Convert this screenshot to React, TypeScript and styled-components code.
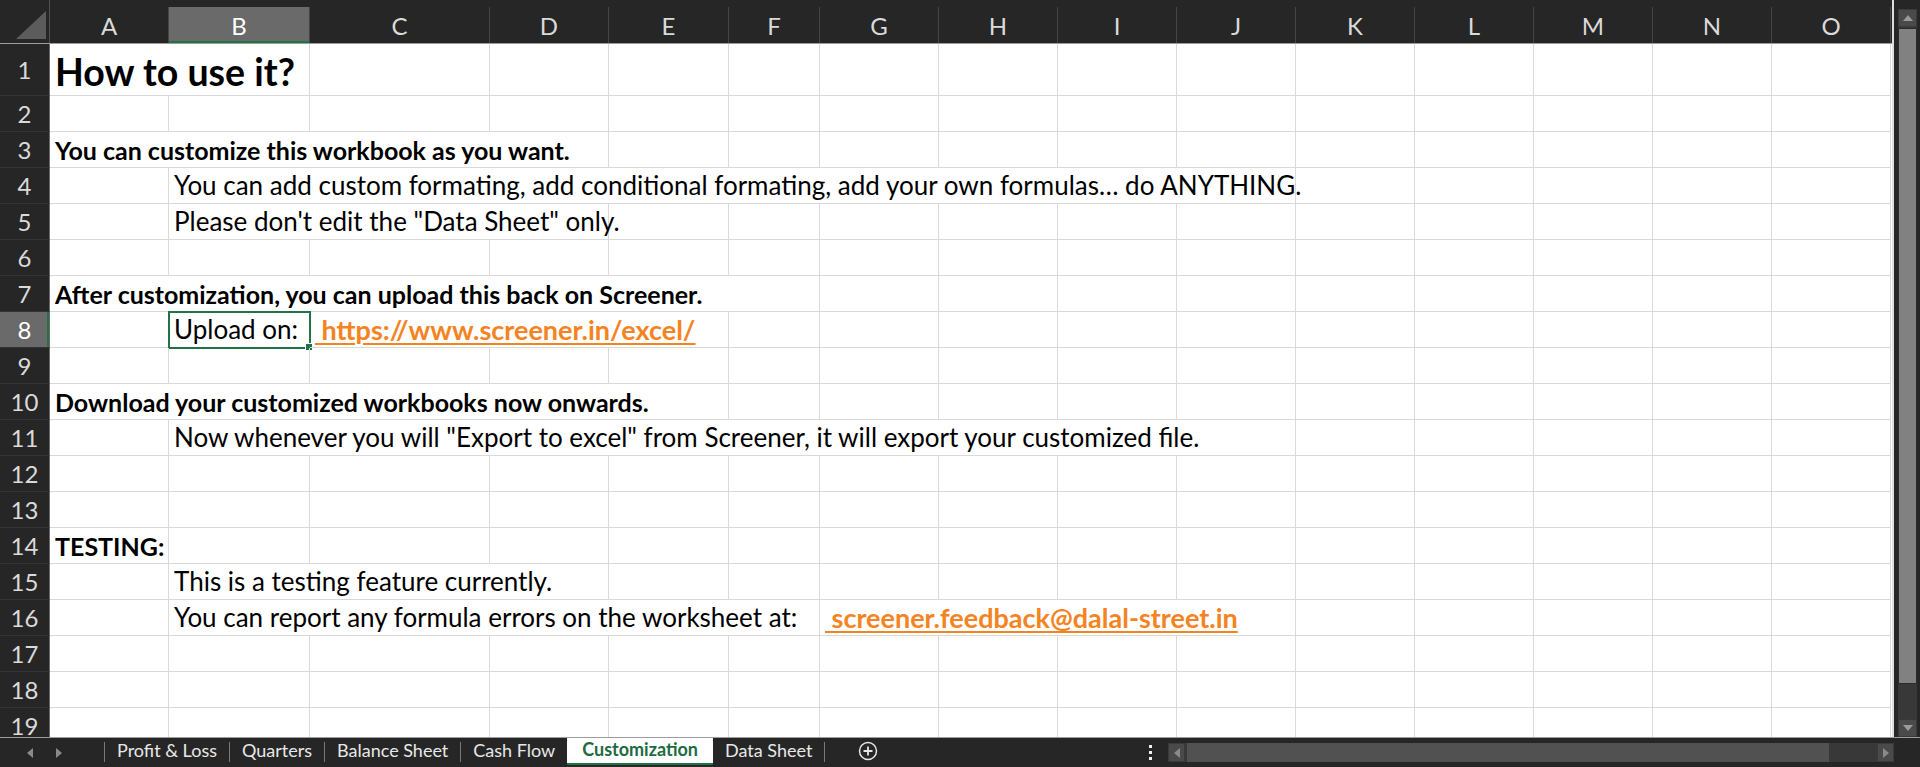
import * as React from 'react'
import styled, { createGlobalStyle, css } from 'styled-components'

const colours = {
  chrome: '#262626',
  headSelected: '#6a6a6a',
  headText: '#dadada',
  grid: '#d9d9d9',
  green: '#217346',
  link: '#f5831f',
}

const COLS = ['A', 'B', 'C', 'D', 'E', 'F', 'G', 'H', 'I', 'J', 'K', 'L', 'M', 'N', 'O']
const WIDTHS = [119, 141, 180, 119, 120, 91, 119, 119, 119, 119, 119, 119, 119, 119, 119]
const TEMPLATE = `50px ${WIDTHS.map(w => `${w}px`).join(' ')}`

type Kind = 'title' | 'bold' | 'text' | 'link'

interface CellDef {
  col: number
  span?: number
  text: string
  kind: Kind
  selected?: boolean
}

interface RowDef {
  num: number
  tall?: boolean
  cells: CellDef[]
}

const ROWS: RowDef[] = [
  { num: 1, tall: true, cells: [{ col: 0, span: 2, text: 'How to use it?', kind: 'title' }] },
  { num: 2, cells: [] },
  { num: 3, cells: [{ col: 0, span: 4, text: 'You can customize this workbook as you want.', kind: 'bold' }] },
  {
    num: 4,
    cells: [
      {
        col: 1,
        span: 9,
        text: 'You can add custom formating, add conditional formating, add your own formulas… do ANYTHING.',
        kind: 'text',
      },
    ],
  },
  { num: 5, cells: [{ col: 1, span: 3, text: 'Please don\'t edit the "Data Sheet" only.', kind: 'text' }] },
  { num: 6, cells: [] },
  {
    num: 7,
    cells: [{ col: 0, span: 6, text: 'After customization, you can upload this back on Screener.', kind: 'bold' }],
  },
  {
    num: 8,
    cells: [
      { col: 1, text: 'Upload on:', kind: 'text', selected: true },
      { col: 2, span: 3, text: ' https://www.screener.in/excel/', kind: 'link' },
    ],
  },
  { num: 9, cells: [] },
  { num: 10, cells: [{ col: 0, span: 5, text: 'Download your customized workbooks now onwards.', kind: 'bold' }] },
  {
    num: 11,
    cells: [
      {
        col: 1,
        span: 9,
        text: 'Now whenever you will "Export to excel" from Screener, it will export your customized file.',
        kind: 'text',
      },
    ],
  },
  { num: 12, cells: [] },
  { num: 13, cells: [] },
  { num: 14, cells: [{ col: 0, text: 'TESTING:', kind: 'bold' }] },
  { num: 15, cells: [{ col: 1, span: 3, text: 'This is a testing feature currently.', kind: 'text' }] },
  {
    num: 16,
    cells: [
      { col: 1, span: 5, text: 'You can report any formula errors on the worksheet at:', kind: 'text' },
      { col: 6, span: 4, text: ' screener.feedback@dalal-street.in', kind: 'link' },
    ],
  },
  { num: 17, cells: [] },
  { num: 18, cells: [] },
  { num: 19, cells: [] },
]

const TABS = ['Profit & Loss', 'Quarters', 'Balance Sheet', 'Cash Flow', 'Customization', 'Data Sheet']
const ACTIVE_TAB = 4

const GlobalStyle = createGlobalStyle`
  html, body {
    margin: 0;
    padding: 0;
    background: ${colours.chrome};
    overflow: hidden;
  }
  * {
    box-sizing: border-box;
  }
`

const renderCells = (row: RowDef) => {
  const out: React.ReactNode[] = []
  let c = 0
  while (c < COLS.length) {
    const def = row.cells.find(d => d.col === c)
    if (def) {
      const span = def.span || 1
      out.push(
        <Cell key={c} $span={span} $kind={def.kind} $selected={!!def.selected}>
          {def.text}
        </Cell>
      )
      c += span
    } else {
      out.push(<Cell key={c} $span={1} $kind="text" $selected={false} />)
      c += 1
    }
  }
  return out
}

const SELECTED_ROW = 8
const SELECTED_COL = 1

export default function App() {
  return (
    <>
      <GlobalStyle />
      <Window>
        <Main>
          <Sheet>
            <HeaderRow>
              <Corner>
                <svg width="30" height="28" viewBox="0 0 30 28">
                  <polygon points="0,28 30,0 30,28" fill="#5c5c5c" />
                </svg>
              </Corner>
              {COLS.map((col, i) => (
                <ColHead key={col} $selected={i === SELECTED_COL}>
                  {col}
                </ColHead>
              ))}
            </HeaderRow>
            {ROWS.map(row => (
              <Row key={row.num} $tall={!!row.tall}>
                <RowHead $selected={row.num === SELECTED_ROW}>{row.num}</RowHead>
                {renderCells(row)}
              </Row>
            ))}
          </Sheet>
          <VScroll>
            <ScrollBtn $v>
              <svg width="10" height="6" viewBox="0 0 10 6">
                <polygon points="0,6 5,0 10,6" fill="#9a9a9a" />
              </svg>
            </ScrollBtn>
            <VThumb />
            <Track />
            <ScrollBtn $v>
              <svg width="10" height="6" viewBox="0 0 10 6">
                <polygon points="0,0 10,0 5,6" fill="#9a9a9a" />
              </svg>
            </ScrollBtn>
          </VScroll>
        </Main>
        <TabBar>
          <Nav>
            <svg width="6" height="10" viewBox="0 0 6 10">
              <polygon points="6,0 6,10 0,5" fill="#8a8a8a" />
            </svg>
            <svg width="6" height="10" viewBox="0 0 6 10">
              <polygon points="0,0 6,5 0,10" fill="#8a8a8a" />
            </svg>
          </Nav>
          {TABS.map((tab, i) => (
            <React.Fragment key={tab}>
              {i !== ACTIVE_TAB && i !== ACTIVE_TAB + 1 && <TabSep />}
              <Tab $active={i === ACTIVE_TAB}>{tab}</Tab>
            </React.Fragment>
          ))}
          <TabSep />
          <AddSheet>
            <svg width="20" height="20" viewBox="0 0 20 20">
              <circle cx="10" cy="10" r="8.5" fill="none" stroke="#e6e6e6" strokeWidth="1.5" />
              <path d="M10 5.5v9M5.5 10h9" stroke="#e6e6e6" strokeWidth="1.8" />
            </svg>
          </AddSheet>
          <Spacer />
          <Dots>
            <span />
            <span />
            <span />
          </Dots>
          <HScroll>
            <ScrollBtn>
              <svg width="6" height="10" viewBox="0 0 6 10">
                <polygon points="6,0 6,10 0,5" fill="#8a8a8a" />
              </svg>
            </ScrollBtn>
            <HThumb />
            <Track />
            <ScrollBtn>
              <svg width="6" height="10" viewBox="0 0 6 10">
                <polygon points="0,0 6,5 0,10" fill="#8a8a8a" />
              </svg>
            </ScrollBtn>
          </HScroll>
        </TabBar>
      </Window>
    </>
  )
}

const Window = styled.div`
  width: 1920px;
  height: 767px;
  background: ${colours.chrome};
  display: flex;
  flex-direction: column;
  overflow: hidden;
`

const Main = styled.div`
  display: flex;
  height: 737px;
`

const Sheet = styled.div`
  width: 1894px;
  height: 737px;
  overflow: hidden;
  border-right: 2px solid #dedede;
  margin-right: 4px;
  background: #ffffff;
`

const HeaderRow = styled.div`
  display: grid;
  grid-template-columns: ${TEMPLATE};
  height: 44px;
  background: ${colours.chrome};
  border-bottom: 1px solid #9c9c9c;
  align-items: end;
`

const Corner = styled.div`
  height: 43px;
  display: flex;
  align-items: flex-end;
  justify-content: flex-end;
  padding: 0 3px 4px 0;
  border-right: 1px solid #505050;
`

const headFont = css`
  font-family: Lato, 'Open Sans', sans-serif;
  font-size: 24px;
  color: ${colours.headText};
`

const ColHead = styled.div<{ $selected: boolean }>`
  ${headFont};
  height: 36px;
  display: flex;
  align-items: center;
  justify-content: center;
  border-right: 1px solid #454545;
  ${({ $selected }) =>
    $selected &&
    css`
      background: ${colours.headSelected};
      color: #ffffff;
      box-shadow: inset 0 -2px 0 ${colours.green};
    `}
`

const Row = styled.div<{ $tall: boolean }>`
  display: grid;
  grid-template-columns: ${TEMPLATE};
  height: ${({ $tall }) => ($tall ? '52px' : '36px')};
`

const RowHead = styled.div<{ $selected: boolean }>`
  ${headFont};
  background: ${({ $selected }) => ($selected ? colours.headSelected : colours.chrome)};
  color: ${({ $selected }) => ($selected ? '#ffffff' : colours.headText)};
  display: flex;
  align-items: center;
  justify-content: center;
  border-right: 1px solid #6a6a6a;
  border-bottom: 1px solid #333333;
  ${({ $selected }) =>
    $selected &&
    css`
      box-shadow: inset -2px 0 0 ${colours.green};
    `}
`

const kindStyles: Record<Kind, ReturnType<typeof css>> = {
  title: css`
    font-size: 37.5px;
    font-weight: 700;
    padding-bottom: 2px;
  `,
  bold: css`
    font-size: 25px;
    font-weight: 700;
  `,
  text: css``,
  link: css`
    font-size: 27px;
    font-weight: 700;
    color: ${colours.link};
    text-decoration: underline;
    text-decoration-thickness: 2px;
    text-underline-offset: 3px;
  `,
}

const Cell = styled.div<{ $span: number; $kind: Kind; $selected: boolean }>`
  grid-column: span ${({ $span }) => $span};
  position: relative;
  display: flex;
  align-items: flex-end;
  padding: 0 0 2px 5px;
  border-right: 1px solid ${colours.grid};
  border-bottom: 1px solid ${colours.grid};
  font-family: Lato, 'Open Sans', sans-serif;
  font-size: 26px;
  line-height: 1.15;
  color: #000000;
  white-space: pre;
  ${({ $kind }) => kindStyles[$kind]};
  ${({ $selected }) =>
    $selected &&
    css`
      outline: 2px solid ${colours.green};
      outline-offset: -1px;
      &::after {
        content: '';
        position: absolute;
        right: -4px;
        bottom: -4px;
        width: 6px;
        height: 6px;
        background: ${colours.green};
        border: 1px solid #ffffff;
      }
    `}
`

const VScroll = styled.div`
  width: 19px;
  margin-top: 9px;
  margin-right: 3px;
  display: flex;
  flex-direction: column;
  background: #383838;
`

const ScrollBtn = styled.div<{ $v?: boolean }>`
  flex: none;
  width: ${({ $v }) => ($v ? '19px' : '17px')};
  height: ${({ $v }) => ($v ? '18px' : '19px')};
  background: #4a4a4a;
  border: 1px solid #3a3a3a;
  display: flex;
  align-items: center;
  justify-content: center;
`

const VThumb = styled.div`
  flex: none;
  height: 656px;
  margin-top: 1px;
  background: #818181;
  border: 1px solid #2b2b2b;
`

const Track = styled.div`
  flex: 1;
`

const TabBar = styled.div`
  height: 30px;
  border-top: 1px solid #9c9c9c;
  display: flex;
  align-items: stretch;
  background: ${colours.chrome};
  font-family: Lato, 'Open Sans', sans-serif;
  font-size: 18px;
`

const Nav = styled.div`
  width: 104px;
  display: flex;
  align-items: center;
  gap: 23px;
  padding-left: 27px;
`

const TabSep = styled.div`
  width: 1px;
  flex: none;
  background: #7a7a7a;
  margin: 4px 0 5px;
`

const Tab = styled.div<{ $active: boolean }>`
  display: flex;
  align-items: center;
  padding: 0 12px 6px;
  color: #e8e8e8;
  white-space: nowrap;
  ${({ $active }) =>
    $active &&
    css`
      background: #ffffff;
      color: #1d6b41;
      font-weight: 700;
      padding: 0 15px 4px;
      margin-bottom: 2px;
      border-bottom: 2px solid ${colours.green};
    `}
`

const AddSheet = styled.div`
  display: flex;
  align-items: center;
  padding-bottom: 3px;
  margin-left: 33px;
`

const Spacer = styled.div`
  flex: 1;
`

const Dots = styled.div`
  width: 10px;
  margin-right: 13px;
  display: flex;
  flex-direction: column;
  align-items: center;
  justify-content: center;
  gap: 3px;
  span {
    width: 3px;
    height: 3px;
    background: #f0f0f0;
  }
`

const HScroll = styled.div`
  width: 726px;
  height: 19px;
  align-self: center;
  margin-right: 26px;
  display: flex;
  background: #383838;
`

const HThumb = styled.div`
  flex: none;
  width: 642px;
  margin-left: 2px;
  background: #515151;
`
